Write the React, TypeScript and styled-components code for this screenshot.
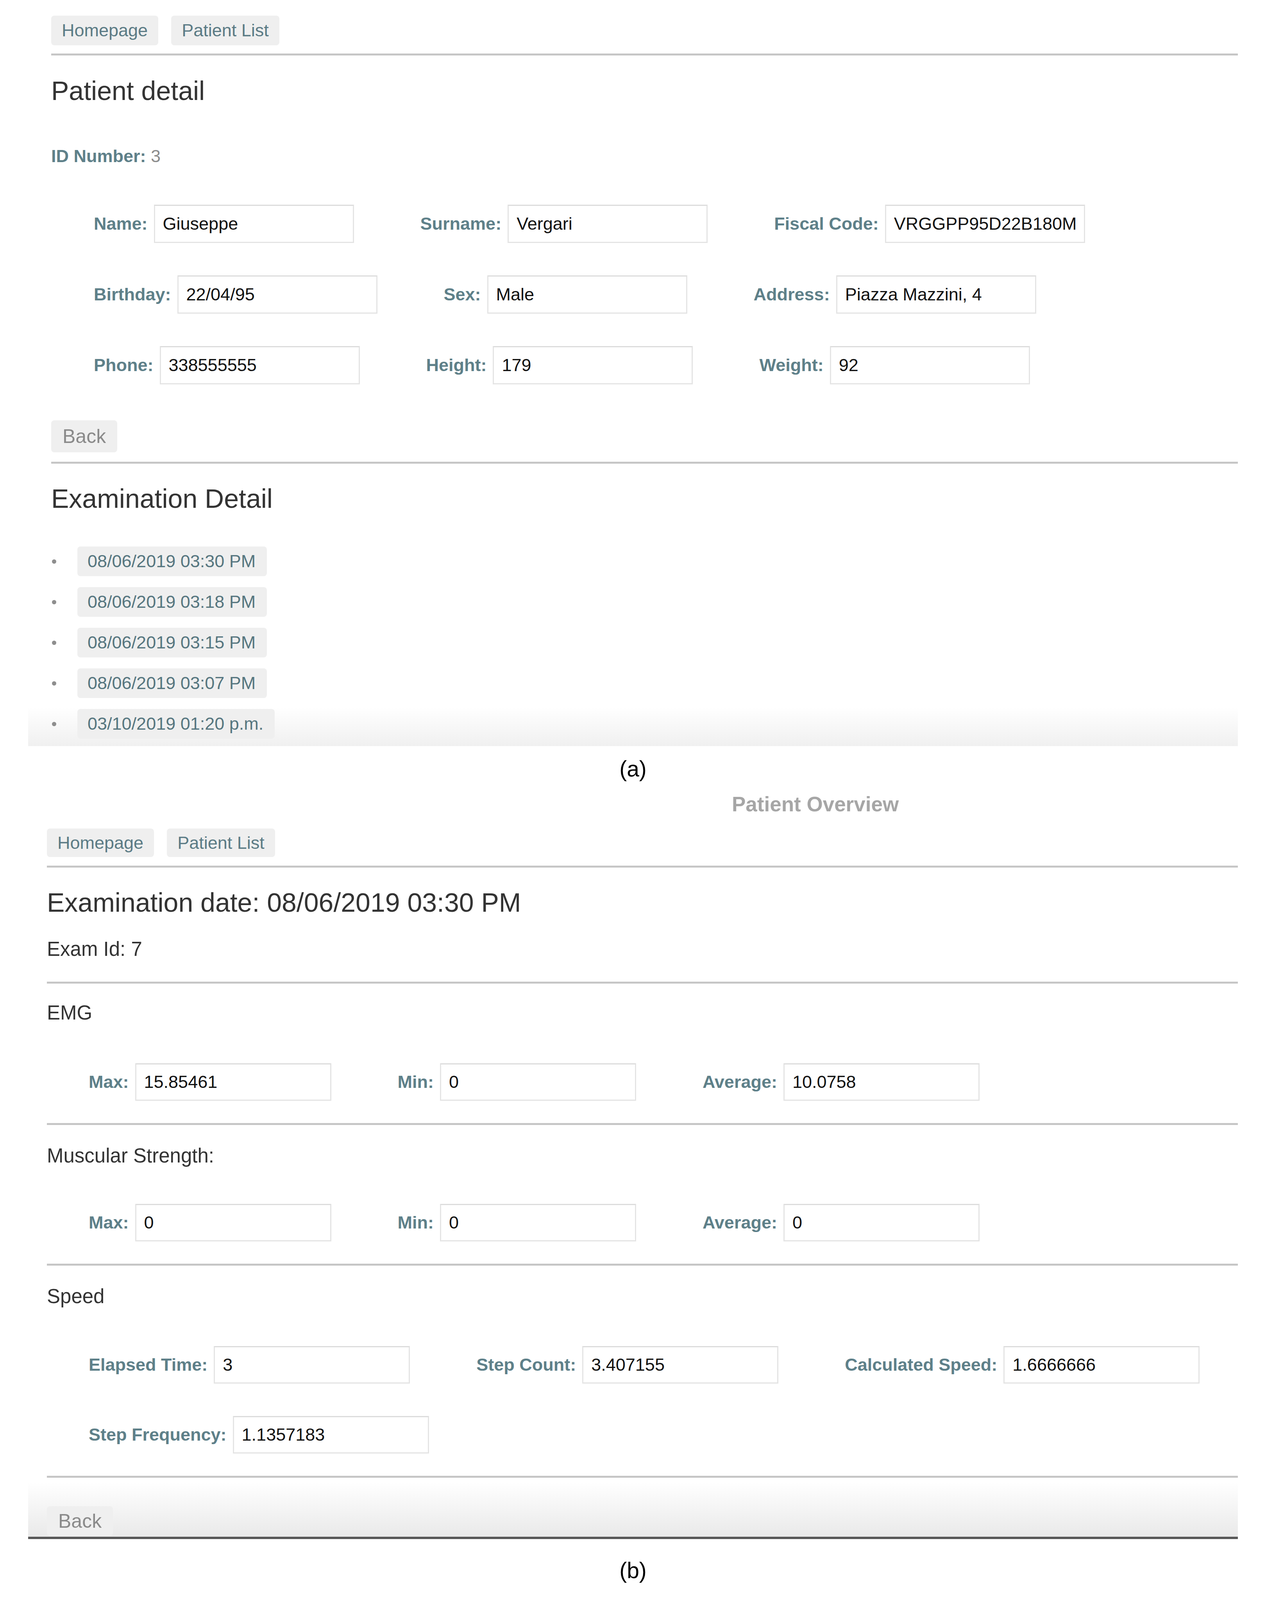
import React from 'react';
import styled, { createGlobalStyle } from 'styled-components';

const GlobalStyle = createGlobalStyle`
  html, body {
    margin: 0;
    padding: 0;
    background: #ffffff;
  }
  body {
    font-family: 'Liberation Sans', Arial, Helvetica, sans-serif;
    color: #333333;
  }
  #root {
    width: 3240px;
  }
`;

interface Field {
  label: string
  value: string
}

const patientRows: Field[][] = [
  [
    { label: 'Name:', value: 'Giuseppe' },
    { label: 'Surname:', value: 'Vergari' },
    { label: 'Fiscal Code:', value: 'VRGGPP95D22B180M' },
  ],
  [
    { label: 'Birthday:', value: '22/04/95' },
    { label: 'Sex:', value: 'Male' },
    { label: 'Address:', value: 'Piazza Mazzini, 4' },
  ],
  [
    { label: 'Phone:', value: '338555555' },
    { label: 'Height:', value: '179' },
    { label: 'Weight:', value: '92' },
  ],
];

const examinations = [
  '08/06/2019 03:30 PM',
  '08/06/2019 03:18 PM',
  '08/06/2019 03:15 PM',
  '08/06/2019 03:07 PM',
  '03/10/2019 01:20 p.m.',
];

// top = space above the title, gap = space between title and the inputs
const sections: { title: string, top: number, gap: number, rows: Field[][] }[] = [
  {
    title: 'EMG',
    top: 45,
    gap: 99,
    rows: [[
      { label: 'Max:', value: '15.85461' },
      { label: 'Min:', value: '0' },
      { label: 'Average:', value: '10.0758' },
    ]],
  },
  {
    title: 'Muscular Strength:',
    top: 49,
    gap: 93,
    rows: [[
      { label: 'Max:', value: '0' },
      { label: 'Min:', value: '0' },
      { label: 'Average:', value: '0' },
    ]],
  },
  {
    title: 'Speed',
    top: 49,
    gap: 97,
    rows: [
      [
        { label: 'Elapsed Time:', value: '3' },
        { label: 'Step Count:', value: '3.407155' },
        { label: 'Calculated Speed:', value: '1.6666666' },
      ],
      [
        { label: 'Step Frequency:', value: '1.1357183' },
      ],
    ],
  },
];

interface FieldRowsProps {
  rows: Field[][]
  width: number
  height: number
  indent: number
}

function FieldRows({ rows, width, height, indent }: FieldRowsProps) {
  return (
    <FieldGrid $indent={indent}>
      {rows.map((row, i) => (
        <FieldRow key={i}>
          {row.map((field) => (
            <FieldGroup key={field.label}>
              <FieldLabel>{field.label}</FieldLabel>
              <FieldInput $width={width} $height={height} readOnly value={field.value} />
            </FieldGroup>
          ))}
        </FieldRow>
      ))}
    </FieldGrid>
  );
}

function NavBar({ height }: { height: number }) {
  return (
    <Nav>
      <NavButton $height={height}>Homepage</NavButton>
      <NavButton $height={height}>Patient List</NavButton>
    </Nav>
  );
}

export default function App() {
  return (
    <>
      <GlobalStyle />
      <Figure>
        <Panel $inset={59} $fade={100} $top={40} $bottom={19}>
          <NavBar height={76} />
          <Rule $top={21} />
          <PageTitle $top={50}>Patient detail</PageTitle>
          <IdLine>
            <IdLabel>ID Number:</IdLabel>
            {' '}
            <IdValue>3</IdValue>
          </IdLine>
          <Spacer $height={97} />
          <FieldRows rows={patientRows} width={512} height={98} indent={109} />
          <BackButton $top={92} $height={82}>Back</BackButton>
          <Rule $top={24} />
          <PageTitle $top={49}>Examination Detail</PageTitle>
          <ExamList>
            {examinations.map((date) => (
              <ExamItem key={date}>
                <ExamPill>{date}</ExamPill>
              </ExamItem>
            ))}
          </ExamList>
        </Panel>
        <Caption $top={25}>(a)</Caption>

        <Panel $inset={48} $fade={140} $top={0} $bottom={2} $closed>
          <OverviewHeader>Patient Overview</OverviewHeader>
          <NavBar height={73} />
          <Rule $top={22} />
          <PageTitle $top={49}>Examination date: 08/06/2019 03:30 PM</PageTitle>
          <ExamId>Exam Id: 7</ExamId>
          <Rule $top={53} />
          {sections.map((section) => (
            <Section key={section.title}>
              <SectionTitle $top={section.top}>{section.title}</SectionTitle>
              <Spacer $height={section.gap} />
              <FieldRows rows={section.rows} width={502} height={96} indent={107} />
              <Rule $top={57} />
            </Section>
          ))}
          <BackButton $top={73} $height={76}>Back</BackButton>
        </Panel>
        <Caption $top={47}>(b)</Caption>
      </Figure>
    </>
  );
}

const Figure = styled.div`
  display: flex;
  flex-direction: column;
  width: 3240px;
  padding: 0 72px;
  box-sizing: border-box;
`;

const Panel = styled.section<{ $inset: number, $fade: number, $top: number, $bottom: number, $closed?: boolean }>`
  display: flex;
  flex-direction: column;
  align-items: flex-start;
  margin-top: ${(p) => (p.$closed ? 27 : 0)}px;
  padding: ${(p) => p.$top}px 0 ${(p) => p.$bottom}px ${(p) => p.$inset}px;
  background: linear-gradient(
    to bottom,
    #ffffff calc(100% - ${(p) => p.$fade}px),
    ${(p) => (p.$closed ? '#e9e9e9' : '#f0f0f0')} 100%
  );
  border-bottom: ${(p) => (p.$closed ? '6px solid #585858' : 'none')};
`;

const Nav = styled.nav`
  display: flex;
  gap: 33px;
`;

const NavButton = styled.button<{ $height: number }>`
  height: ${(p) => p.$height}px;
  padding: 0 27px;
  border: none;
  border-radius: 8px;
  background: #efefef;
  font-family: 'Liberation Sans', Arial, sans-serif;
  font-size: 45px;
  color: #5b7b85;
  cursor: pointer;
`;

const Rule = styled.hr<{ $top: number }>`
  align-self: stretch;
  height: 0;
  margin: ${(p) => p.$top}px 0 0;
  border: none;
  border-top: 5px solid #c6c6c6;
`;

const PageTitle = styled.h2<{ $top: number }>`
  margin: ${(p) => p.$top}px 0 0;
  font-size: 68px;
  font-weight: 400;
  line-height: 80px;
  color: #333333;
`;

const IdLine = styled.p`
  margin: 101px 0 0;
  font-size: 45px;
  line-height: 54px;
`;

const IdLabel = styled.b`
  color: #5e8089;
`;

const IdValue = styled.span`
  color: #8c8c8c;
`;

const Spacer = styled.div<{ $height: number }>`
  flex-shrink: 0;
  height: ${(p) => p.$height}px;
`;

const FieldGrid = styled.div<{ $indent: number }>`
  display: flex;
  flex-direction: column;
  gap: 83px;
  padding-left: ${(p) => p.$indent}px;
`;

const FieldRow = styled.div`
  display: flex;
  align-items: center;
  gap: 170px;
`;

const FieldGroup = styled.label`
  display: flex;
  align-items: center;
  gap: 16px;
`;

const FieldLabel = styled.span`
  font-size: 45px;
  font-weight: 700;
  color: #5e8089;
  white-space: nowrap;
`;

const FieldInput = styled.input<{ $width: number, $height: number }>`
  box-sizing: border-box;
  width: ${(p) => p.$width}px;
  height: ${(p) => p.$height}px;
  padding: 0 4px 0 20px;
  border: 3px solid #e4e4e4;
  border-top-color: #dcdcdc;
  background: #ffffff;
  font-family: 'Liberation Sans', Arial, sans-serif;
  font-size: 45px;
  color: #111111;
  outline: none;
`;

const BackButton = styled.button<{ $top: number, $height: number }>`
  margin-top: ${(p) => p.$top}px;
  height: ${(p) => p.$height}px;
  padding: 0 29px;
  border: none;
  border-radius: 8px;
  background: #efefef;
  font-family: 'Liberation Sans', Arial, sans-serif;
  font-size: 50px;
  color: #8a8a8a;
  cursor: pointer;
`;

const ExamList = styled.ul`
  display: flex;
  flex-direction: column;
  gap: 28px;
  margin: 83px 0 0;
  padding: 0;
  list-style: none;
`;

const ExamItem = styled.li`
  display: flex;
  align-items: center;

  &::before {
    content: "";
    width: 11px;
    height: 11px;
    margin: 0 54px 0 2px;
    border-radius: 50%;
    background: #8e8e8e;
  }
`;

const ExamPill = styled.a`
  display: inline-block;
  height: 76px;
  padding: 0 29px 0 26px;
  border-radius: 8px;
  background: #efefef;
  font-size: 45px;
  line-height: 76px;
  color: #56767f;
  text-decoration: none;
`;

const Caption = styled.div<{ $top: number }>`
  margin-top: ${(p) => p.$top}px;
  font-size: 57px;
  line-height: 66px;
  text-align: center;
  color: #000000;
`;

const OverviewHeader = styled.h1`
  margin: 0 0 31px;
  padding-left: 1753px;
  font-size: 53px;
  font-weight: 700;
  line-height: 62px;
  color: #a6a6a6;
`;

const ExamId = styled.p`
  margin: 50px 0 0;
  font-size: 51px;
  line-height: 60px;
  color: #333333;
`;

const Section = styled.div`
  display: flex;
  flex-direction: column;
  align-self: stretch;
`;

const SectionTitle = styled.h3<{ $top: number }>`
  margin: ${(p) => p.$top}px 0 0;
  font-size: 51px;
  font-weight: 400;
  line-height: 60px;
  color: #333333;
`;
